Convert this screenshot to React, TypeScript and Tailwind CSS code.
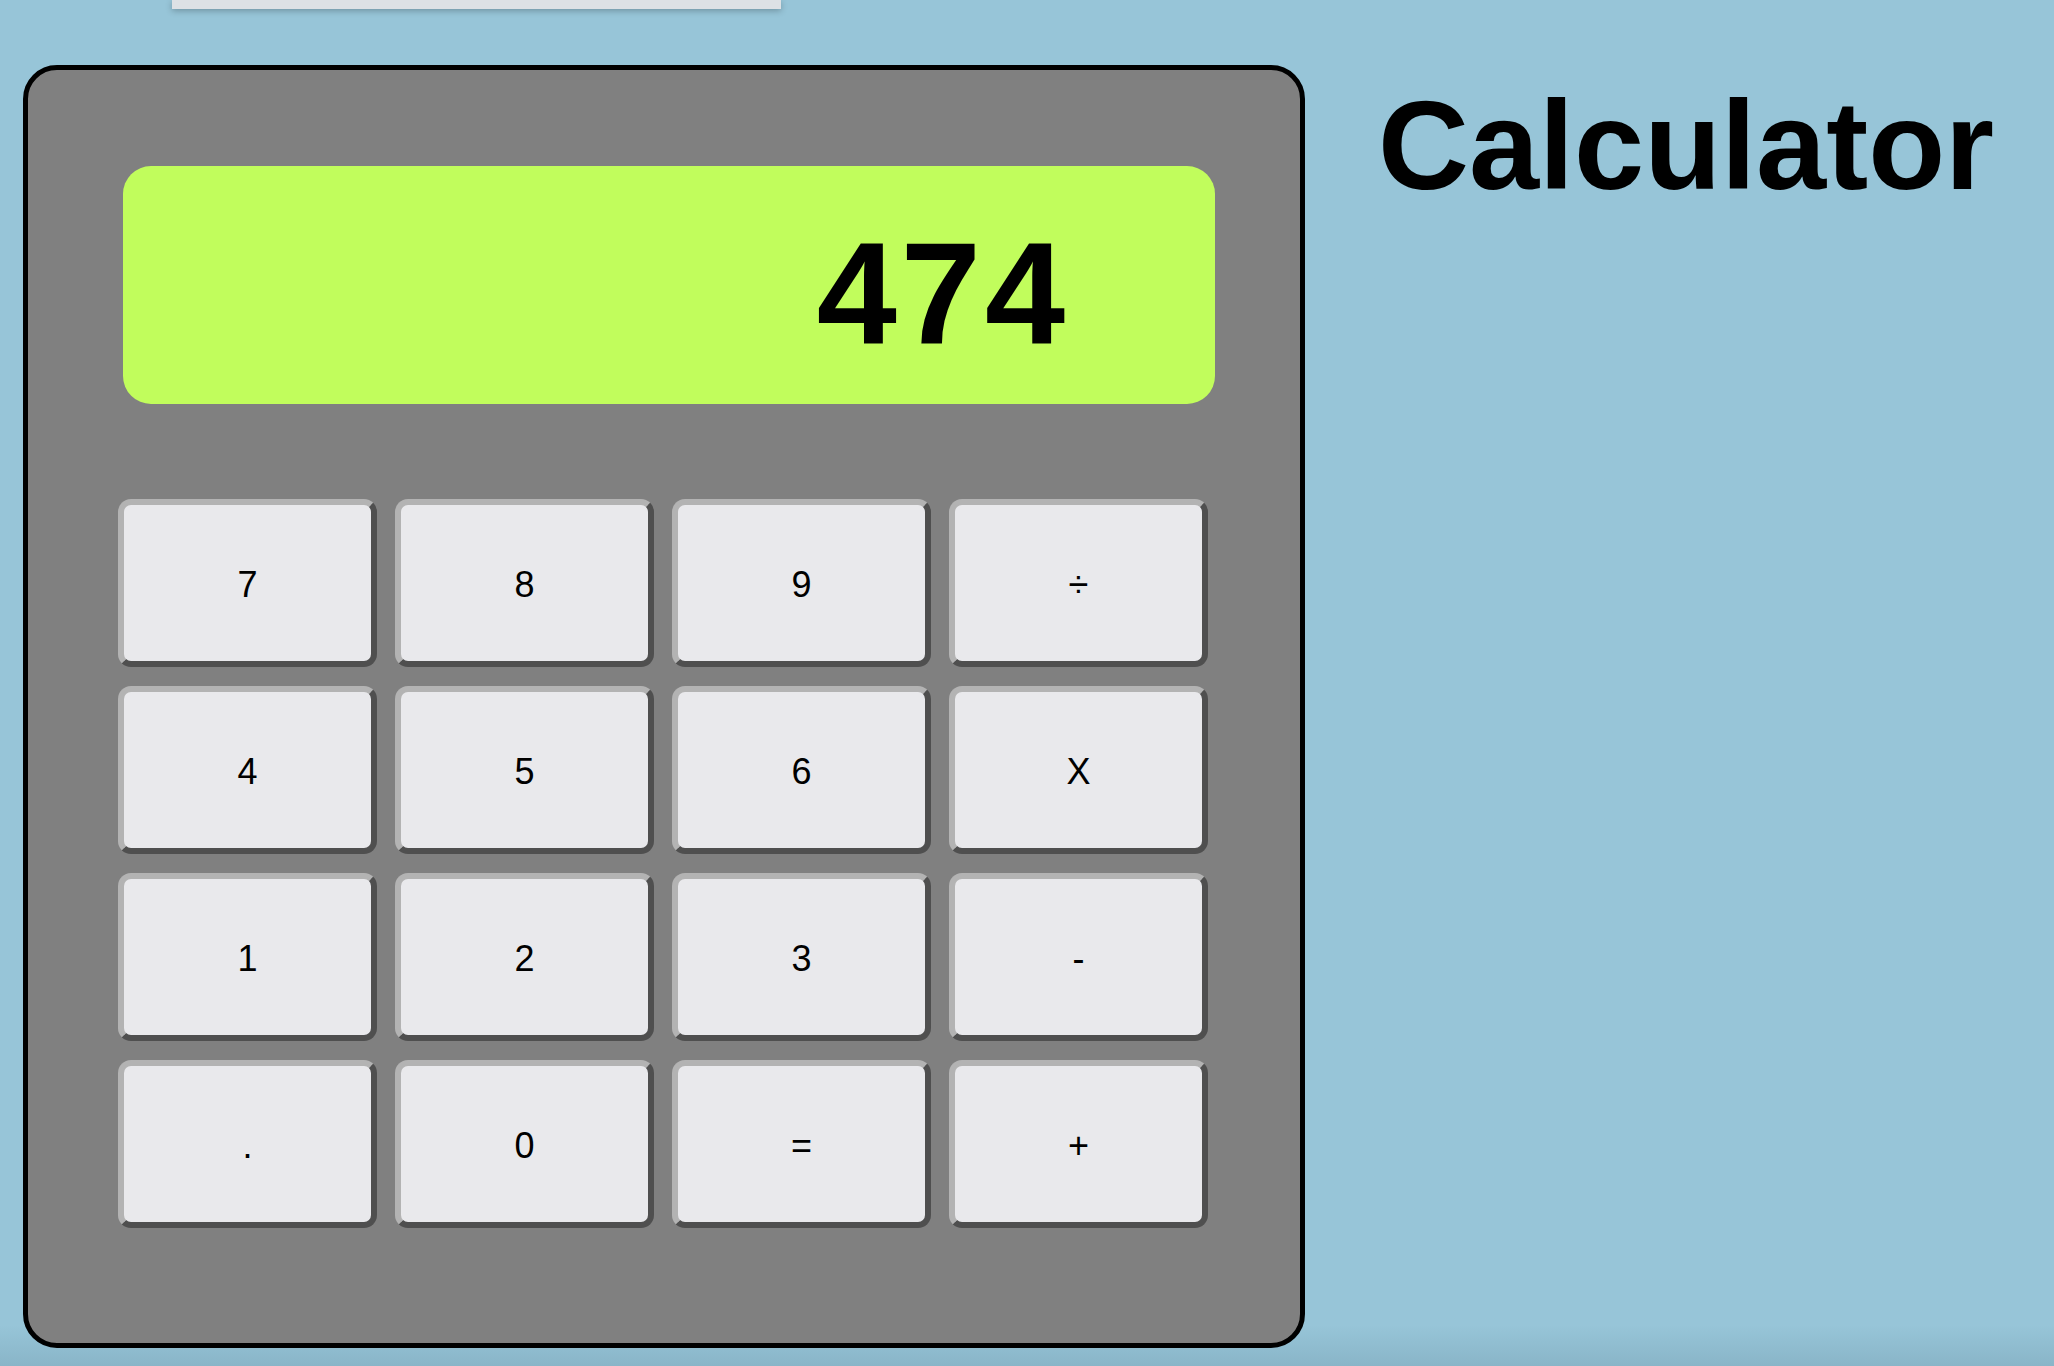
const keys = ["7", "8", "9", "÷", "4", "5", "6", "X", "1", "2", "3", "-", ".", "0", "=", "+"];

function Key({ label }: { label: string }) {
    return (
        <button className="flex h-[168px] w-[259px] items-center justify-center rounded-[13px] border-[6px] border-t-[#b3b3b3] border-l-[#b3b3b3] border-r-[#4f4f4f] border-b-[#4f4f4f] bg-[#e9e9ec] pt-[4px] text-[36px] leading-none text-black">
            {label}
        </button>
    );
}

function Calculator() {
    return (
        <div className="ml-[23px] mt-[65px] h-[1283px] w-[1282px] shrink-0 rounded-[34px] border-[5px] border-black bg-[#808080]">
            <div className="ml-[95px] mt-[96px] flex h-[238px] w-[1092px] items-center justify-end rounded-[28px] bg-[#c1fd5c] pr-[146px] pt-[18px]">
                <span className="text-[144px] font-bold leading-none tracking-[4px] text-black">474</span>
            </div>
            <div className="ml-[90px] mt-[95px] grid w-fit grid-cols-4 gap-x-[18px] gap-y-[19px]">
                {keys.map((k, i) => (
                    <Key key={k + "-" + i} label={k} />
                ))}
            </div>
        </div>
    );
}

export default function App() {
    return (
        <div
            className="relative flex h-[1366px] w-full items-start overflow-hidden bg-linear-to-b from-[#97c5d8] from-[97%] to-[#89b5c8]"
            style={{ fontFamily: '"Liberation Sans", Arial, Helvetica, sans-serif' }}
        >
            {/* cut-off popup at top edge */}
            <div className="absolute left-[172px] top-0 h-[9px] w-[609px] bg-[#dde1e5] shadow-[0_2px_6px_rgba(0,0,0,0.25)]" />
            <Calculator />
            <h1 className="ml-[73px] mt-[83px] text-[126px] font-bold leading-none text-black">Calculator</h1>
        </div>
    );
}
